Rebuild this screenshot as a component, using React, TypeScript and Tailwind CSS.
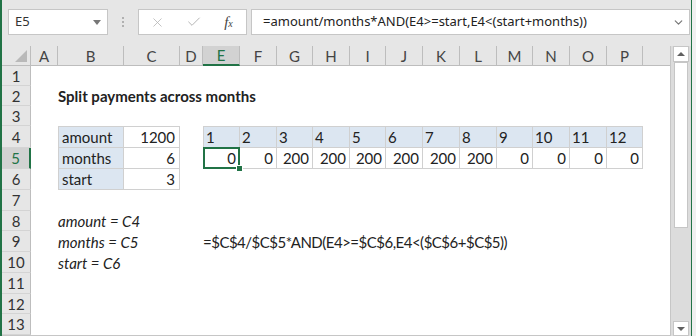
import { ChevronDown, X, Check } from "lucide-react";

const COLS = ["A", "B", "C", "D", "E", "F", "G", "H", "I", "J", "K", "L", "M", "N", "O", "P"];
const ROW_H = [20, 20, 20, 22, 21, 21, 21, 20, 21, 21, 21, 20, 21];
const MONTHS = [1, 2, 3, 4, 5, 6, 7, 8, 9, 10, 11, 12];
const PAYMENTS = [0, 0, 200, 200, 200, 200, 200, 200, 0, 0, 0, 0];

const cellFont = "font-['Lato','Liberation_Sans',sans-serif] text-[15px] leading-[18px] text-[#222]";

type Cell = { text?: string; cls?: string };

const getCell = (row: number, col: string): Cell => {
    const ci = COLS.indexOf(col);
    const box = "border-r border-b border-[#d0d0d0]";
    if (row === 2 && col === "B") return { text: "Split payments across months", cls: "font-bold text-[15.5px]" };
    if (row >= 4 && row <= 6 && col === "B") {
        const labels = ["amount", "months", "start"];
        return {
            text: labels[row - 4],
            cls: `${box} border-l bg-[#dce6f1] pl-[3px] ${row === 4 ? "border-t" : ""}`,
        };
    }
    if (row >= 4 && row <= 6 && col === "C") {
        const vals = ["1200", "6", "3"];
        return {
            text: vals[row - 4],
            cls: `${box} bg-white justify-end pr-[4px] ${row === 4 ? "border-t" : ""}`,
        };
    }
    if (row === 4 && ci >= 4) {
        return {
            text: String(MONTHS[ci - 4]),
            cls: `${box} border-t bg-[#dce6f1] pl-[2px] ${ci === 4 ? "border-l" : ""}`,
        };
    }
    if (row === 5 && ci >= 4) {
        return {
            text: String(PAYMENTS[ci - 4]),
            cls: `${box} bg-white justify-end pr-[3px] ${ci === 4 ? "border-l" : ""}`,
        };
    }
    if (col === "B" && row >= 8 && row <= 10) {
        const notes = ["amount = C4", "months = C5", "start = C6"];
        return { text: notes[row - 8], cls: "italic" };
    }
    if (row === 9 && col === "E")
        return { text: "=$C$4/$C$5*AND(E4>=$C$6,E4<($C$6+$C$5))", cls: "tracking-[-0.5px]" };
    return {};
};

const Toolbar = () => (
    <div className="h-[46px] shrink-0 flex items-start pt-[9px] pl-[6px]">
        <div className="w-[100px] h-[26px] bg-white border border-[#c6c6c6] flex items-center justify-between pl-[6px] pr-[6px]">
            <span className="font-['Noto_Sans','Liberation_Sans',sans-serif] text-[13px] text-[#333]">E5</span>
            <svg width="8" height="5" viewBox="0 0 8 5">
                <path d="M0 0 L8 0 L4 5 Z" fill="#777" />
            </svg>
        </div>
        <div className="w-[30px] h-[26px] flex flex-col items-center justify-center gap-[2px]">
            <span className="w-[2px] h-[2px] bg-[#b0b0b0]" />
            <span className="w-[2px] h-[2px] bg-[#b0b0b0]" />
            <span className="w-[2px] h-[2px] bg-[#b0b0b0]" />
        </div>
        <div className="w-[109px] h-[26px] bg-white border border-[#c6c6c6] flex items-center">
            <div className="w-[37px] flex justify-center">
                <X size={15} strokeWidth={1.3} color="#b5b5b5" />
            </div>
            <div className="w-[35px] flex justify-center">
                <Check size={16} strokeWidth={1.5} color="#b5b5b5" />
            </div>
            <div className="w-[35px] flex justify-center">
                <span className="font-['Liberation_Serif',serif] italic text-[15px] text-[#444] leading-none">
                    f<span className="text-[10px]">x</span>
                </span>
            </div>
        </div>
        <div className="ml-[4px] w-[439px] h-[26px] bg-white border border-[#c6c6c6] flex items-center justify-between pl-[11px] pr-[4px]">
            <span className="font-['Noto_Sans','Liberation_Sans',sans-serif] text-[13px] text-[#222] whitespace-nowrap">
                =amount/months*AND(E4&gt;=start,E4&lt;(start+months))
            </span>
            <ChevronDown size={13} strokeWidth={2.2} color="#777" />
        </div>
    </div>
);

const Sheet = () => (
    <div className="w-[668px] bg-white">
        <div className="grid grid-rows-1 grid-cols-[29px_27px_66px_56px_23px_37px_37px_36px_37px_36px_37px_37px_37px_36px_37px_37px_36px_27px] h-[20px] bg-[#e6e6e6]">
            <div className="relative border-r border-b border-[#bdbdbd]">
                <svg className="absolute right-[3px] bottom-[3px]" width="12" height="12" viewBox="0 0 12 12">
                    <path d="M12 0 L12 12 L0 12 Z" fill="#b9b9b9" />
                </svg>
            </div>
            {COLS.map((c) => (
                <div
                    key={c}
                    className={`flex items-center justify-center ${cellFont} ${
                        c === "E"
                            ? "bg-[#d2d2d2] text-[#217346] border-b-2 border-b-[#217346] border-r border-r-[#bdbdbd]"
                            : "text-[#444] border-r border-b border-[#bdbdbd]"
                    }`}
                >
                    {c}
                </div>
            ))}
            <div className="border-b border-[#bdbdbd]" />
        </div>
        {ROW_H.map((h, ri) => {
            const row = ri + 1;
            return (
                <div
                    key={row}
                    className="grid grid-rows-1 grid-cols-[29px_27px_66px_56px_23px_37px_37px_36px_37px_36px_37px_37px_37px_36px_37px_37px_36px_27px]"
                    style={{ height: h }}
                >
                    <div
                        className={`flex items-center justify-center ${cellFont} border-b border-[#d4d4d4] ${
                            row === 5
                                ? "bg-[#d2d2d2] text-[#217346] border-r-2 border-r-[#217346]"
                                : "bg-[#e6e6e6] text-[#333] border-r border-r-[#bdbdbd]"
                        }`}
                    >
                        {row}
                    </div>
                    {COLS.map((c) => {
                        const cell = getCell(row, c);
                        const selected = row === 5 && c === "E";
                        return (
                            <div
                                key={c}
                                className={`relative flex items-end pb-[1px] whitespace-nowrap ${cellFont} ${cell.cls ?? ""}`}
                            >
                                {cell.text && <span>{cell.text}</span>}
                                {selected && (
                                    <>
                                        <div className="absolute -left-[1px] -top-[1px] -right-[1px] -bottom-[1px] border-2 border-[#217346]" />
                                        <div className="absolute -right-[4px] -bottom-[4px] w-[7px] h-[7px] bg-[#217346] border border-white z-10" />
                                    </>
                                )}
                            </div>
                        );
                    })}
                    <div />
                </div>
            );
        })}
        <div className="h-[1px] bg-[#c6c6c6]" />
    </div>
);

const Scrollbar = () => (
    <div className="w-[21px] border-l border-[#c6c6c6] bg-[#dcdcdc] flex flex-col items-center">
        <div className="w-[16px] h-[16px] bg-white border border-[#c6c6c6] flex items-center justify-center">
            <svg width="8" height="4" viewBox="0 0 8 4">
                <path d="M0 4 L8 4 L4 0 Z" fill="#606060" />
            </svg>
        </div>
        <div className="w-[14px] h-[166px] bg-white border border-[#c6c6c6]" />
        <div className="flex-1" />
        <div className="w-[16px] h-[15px] bg-white border border-[#c6c6c6] flex items-center justify-center">
            <svg width="8" height="4" viewBox="0 0 8 4">
                <path d="M0 0 L8 0 L4 4 Z" fill="#606060" />
            </svg>
        </div>
    </div>
);

export default function App() {
    return (
        <div className="w-[696px] h-[336px] overflow-hidden bg-[#f0f0f0] flex">
            <div className="w-[692px] h-[336px] border-l-2 border-r border-[#217346] bg-[#e6e6e6] flex flex-col">
                <Toolbar />
                <div className="flex flex-1 min-h-0">
                    <Sheet />
                    <Scrollbar />
                </div>
            </div>
        </div>
    );
}
